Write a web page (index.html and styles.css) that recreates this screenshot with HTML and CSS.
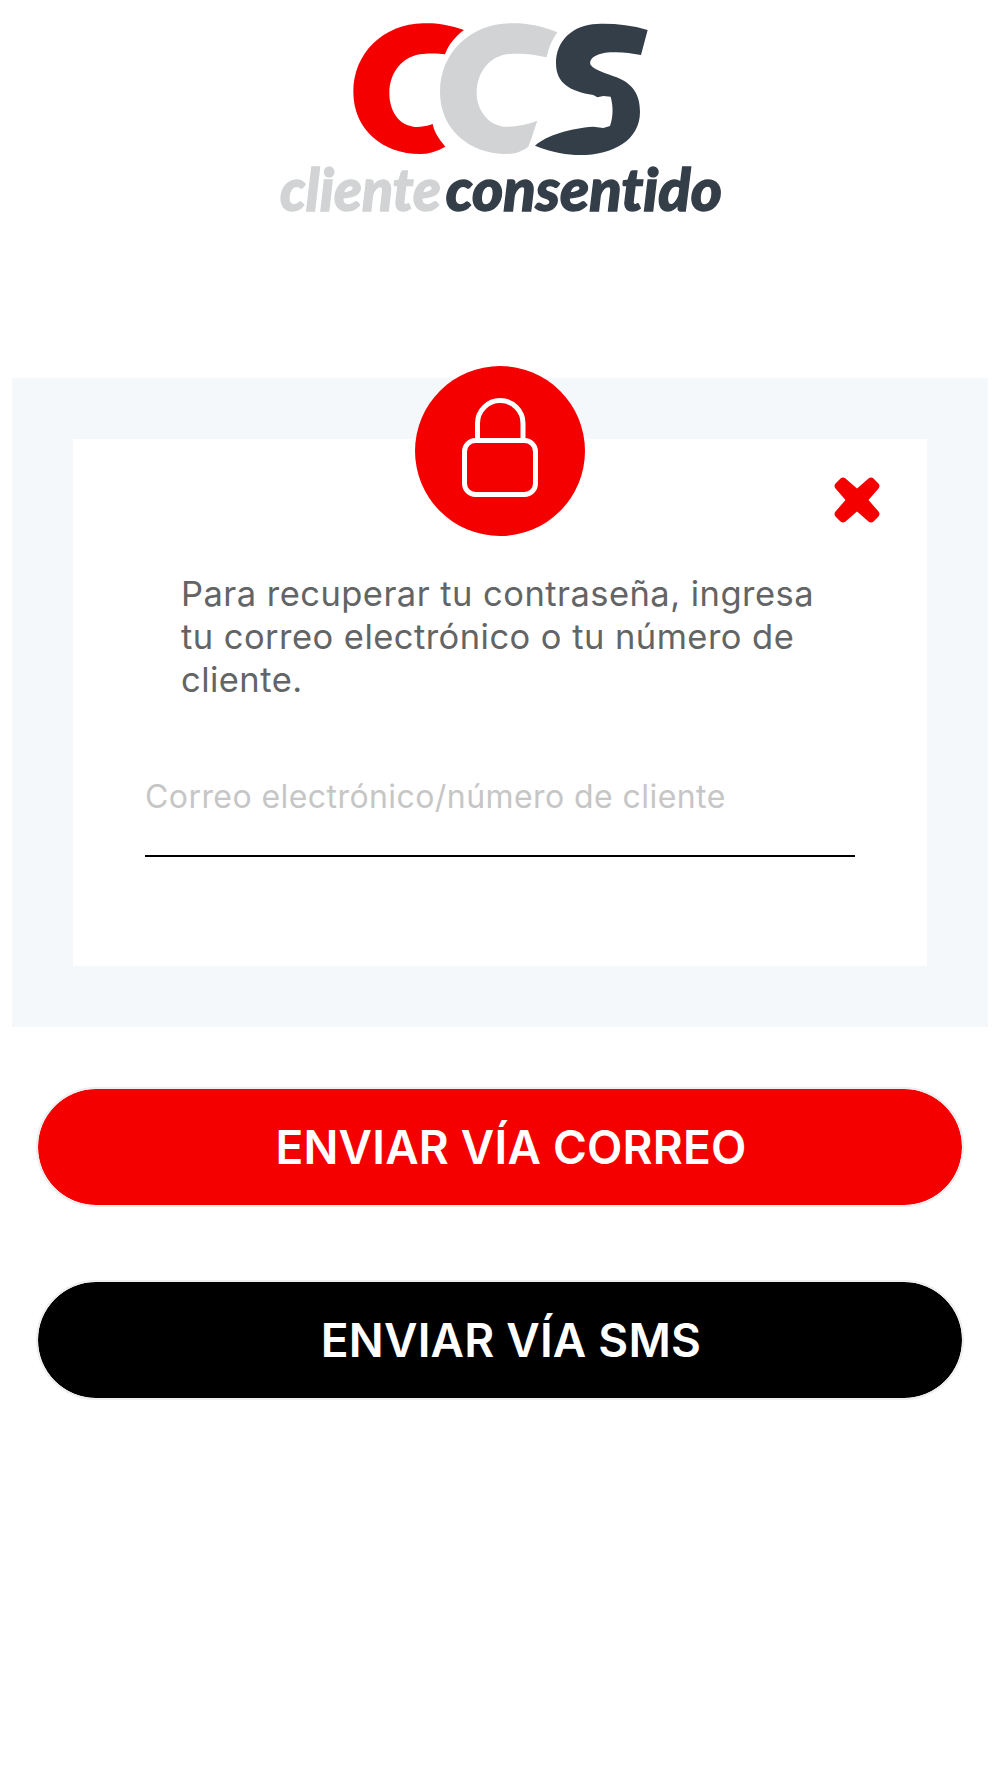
FILE: index.html
```html
<!DOCTYPE html>
<html lang="es">
<head>
<meta charset="utf-8">
<title>Cliente Consentido</title>
<link rel="stylesheet" href="styles.css">
</head>
<body>
<header class="brand">
  <svg class="logo" viewBox="0 0 1440 720" role="img" aria-label="CCS cliente consentido">
    <path class="logo-red" d="M612 90C560 72 520 68 490 70C370 72 280 160 280 275C280 390 370 462 480 462C505 462 530 455 556 440C535 415 522 395 518 372C490 382 470 382 460 380C415 375 388 330 388 280C388 215 430 165 490 162C510 160 535 160 555 163C565 135 585 110 612 90Z"/>
    <path class="logo-grey" d="M892 97C840 75 790 68 750 70C630 72 540 160 540 275C540 390 630 462 740 462C765 462 785 455 805 440C815 415 822 390 832 362C800 375 760 382 730 380C685 375 650 330 650 280C650 215 690 165 750 162C780 160 810 160 860 172C865 145 875 120 892 97Z"/>
    <path class="logo-dark" d="M1163 90C1110 75 1060 70 1010 72C940 75 888 120 888 190C888 250 930 275 1000 285L1012 292L1030 288L1052 290C1060 320 1060 350 1050 378L1030 384L1000 380C930 385 860 405 825 437C880 458 920 465 960 465C1060 465 1140 420 1140 335C1140 280 1115 250 1070 232C1040 220 1005 212 992 195C985 175 1010 160 1050 157C1080 155 1110 158 1143 165Z"/>
    <text class="logo-word logo-word-grey" x="60" y="633" textLength="483" lengthAdjust="spacingAndGlyphs">cliente</text>
    <text class="logo-word logo-word-dark" x="557" y="633" textLength="829" lengthAdjust="spacingAndGlyphs">consentido</text>
  </svg>
</header>

<main class="panel">
  <section class="card">
    <div class="lock-badge">
      <svg class="lock-icon" viewBox="0 0 80 104" aria-hidden="true">
        <path d="M17.500 44.500V27.250A22.750 22.750 0 0 1 63 27.250V44.500"/>
        <rect x="4.500" y="44.500" width="71" height="54" rx="11"/>
      </svg>
    </div>
    <button class="close" type="button" aria-label="Cerrar">
      <svg viewBox="0 0 46 46" aria-hidden="true">
        <path d="M11.500 1.500L23 11.500L34.500 1.500Q37 -0.500 39.500 1.500L44.500 6.500Q46.500 9 44.500 11.500L34.500 23L44.500 34.500Q46.500 37 44.500 39.500L39.500 44.500Q37 46.500 34.500 44.500L23 34.500L11.500 44.500Q9 46.500 6.500 44.500L1.500 39.500Q-0.500 37 1.500 34.500L11.500 23L1.500 11.500Q-0.500 9 1.500 6.500L6.500 1.500Q9 -0.500 11.500 1.500Z"/>
      </svg>
    </button>
    <p class="intro">Para recuperar tu contraseña, ingresa tu correo electrónico o tu número de cliente.</p>
    <div class="field">Correo electrónico/número de cliente</div>
  </section>
</main>

<div class="actions">
  <button class="btn btn-red" type="button">ENVIAR VÍA CORREO</button>
  <button class="btn btn-black" type="button">ENVIAR VÍA SMS</button>
</div>
</body>
</html>
```

FILE: styles.css
```css
* { box-sizing: border-box; }

html, body { margin: 0; padding: 0; background: #fff; }

body {
  font-family: Inter, "Liberation Sans", sans-serif;
  min-height: 1778px;
}

.brand {
  height: 378px;
  display: flex;
  justify-content: center;
  align-items: flex-start;
}

.logo { width: 480px; height: 240px; display: block; }
.logo-red { fill: #f50000; }
.logo-grey { fill: #d1d3d4; }
.logo-dark { fill: #343e49; }

.logo-word {
  font-family: Lato, sans-serif;
  font-weight: 900;
  font-style: italic;
  font-size: 176px;
  font-variant-ligatures: none;
  stroke-width: 4;
}
.logo-word-grey { fill: #d1d3d4; stroke: #d1d3d4; }
.logo-word-dark { fill: #343e49; stroke: #343e49; }

.panel {
  margin: 0 12px;
  padding: 61px;
  background: #f5f8fb;
}

.card {
  position: relative;
  height: 527px;
  padding: 133px 72px 0;
  background: #fff;
}

.lock-badge {
  position: absolute;
  left: 342px;
  top: -73px;
  width: 170px;
  height: 170px;
  border-radius: 50%;
  background: #f50000;
  display: flex;
  align-items: center;
  justify-content: center;
}

.lock-icon {
  width: 80px;
  height: 104px;
  fill: none;
  stroke: #fff;
  stroke-width: 5;
  margin-bottom: 6px;
}

.close {
  position: absolute;
  top: 38px;
  right: 47px;
  width: 46px;
  height: 46px;
  padding: 0;
  border: 0;
  background: none;
}
.close svg { display: block; width: 46px; height: 46px; fill: #f50000; overflow: visible; }

.intro {
  margin: 0;
  padding: 0 0 0 36px;
  font-size: 34.500px;
  line-height: 43px;
  letter-spacing: 0.460px;
  color: #636465;
}

.field {
  margin-top: 72px;
  height: 84px;
  border-bottom: 2px solid #000;
  font-size: 32px;
  line-height: 48px;
  letter-spacing: 0.430px;
  color: #c6c6c6;
}

.actions {
  margin-top: 60px;
  padding: 0 36px;
  display: flex;
  flex-direction: column;
  gap: 73px;
}

.btn {
  height: 120px;
  border: 2px solid #eeeeee;
  border-radius: 60px;
  padding: 0 0 0 22px;
  font-family: Inter, "Liberation Sans", sans-serif;
  font-size: 46px;
  font-weight: 600;
  letter-spacing: 0.200px;
  color: #fff;
  background-clip: padding-box;
}
.btn-red { background-color: #f50000; }
.btn-black { background-color: #000; }
```
